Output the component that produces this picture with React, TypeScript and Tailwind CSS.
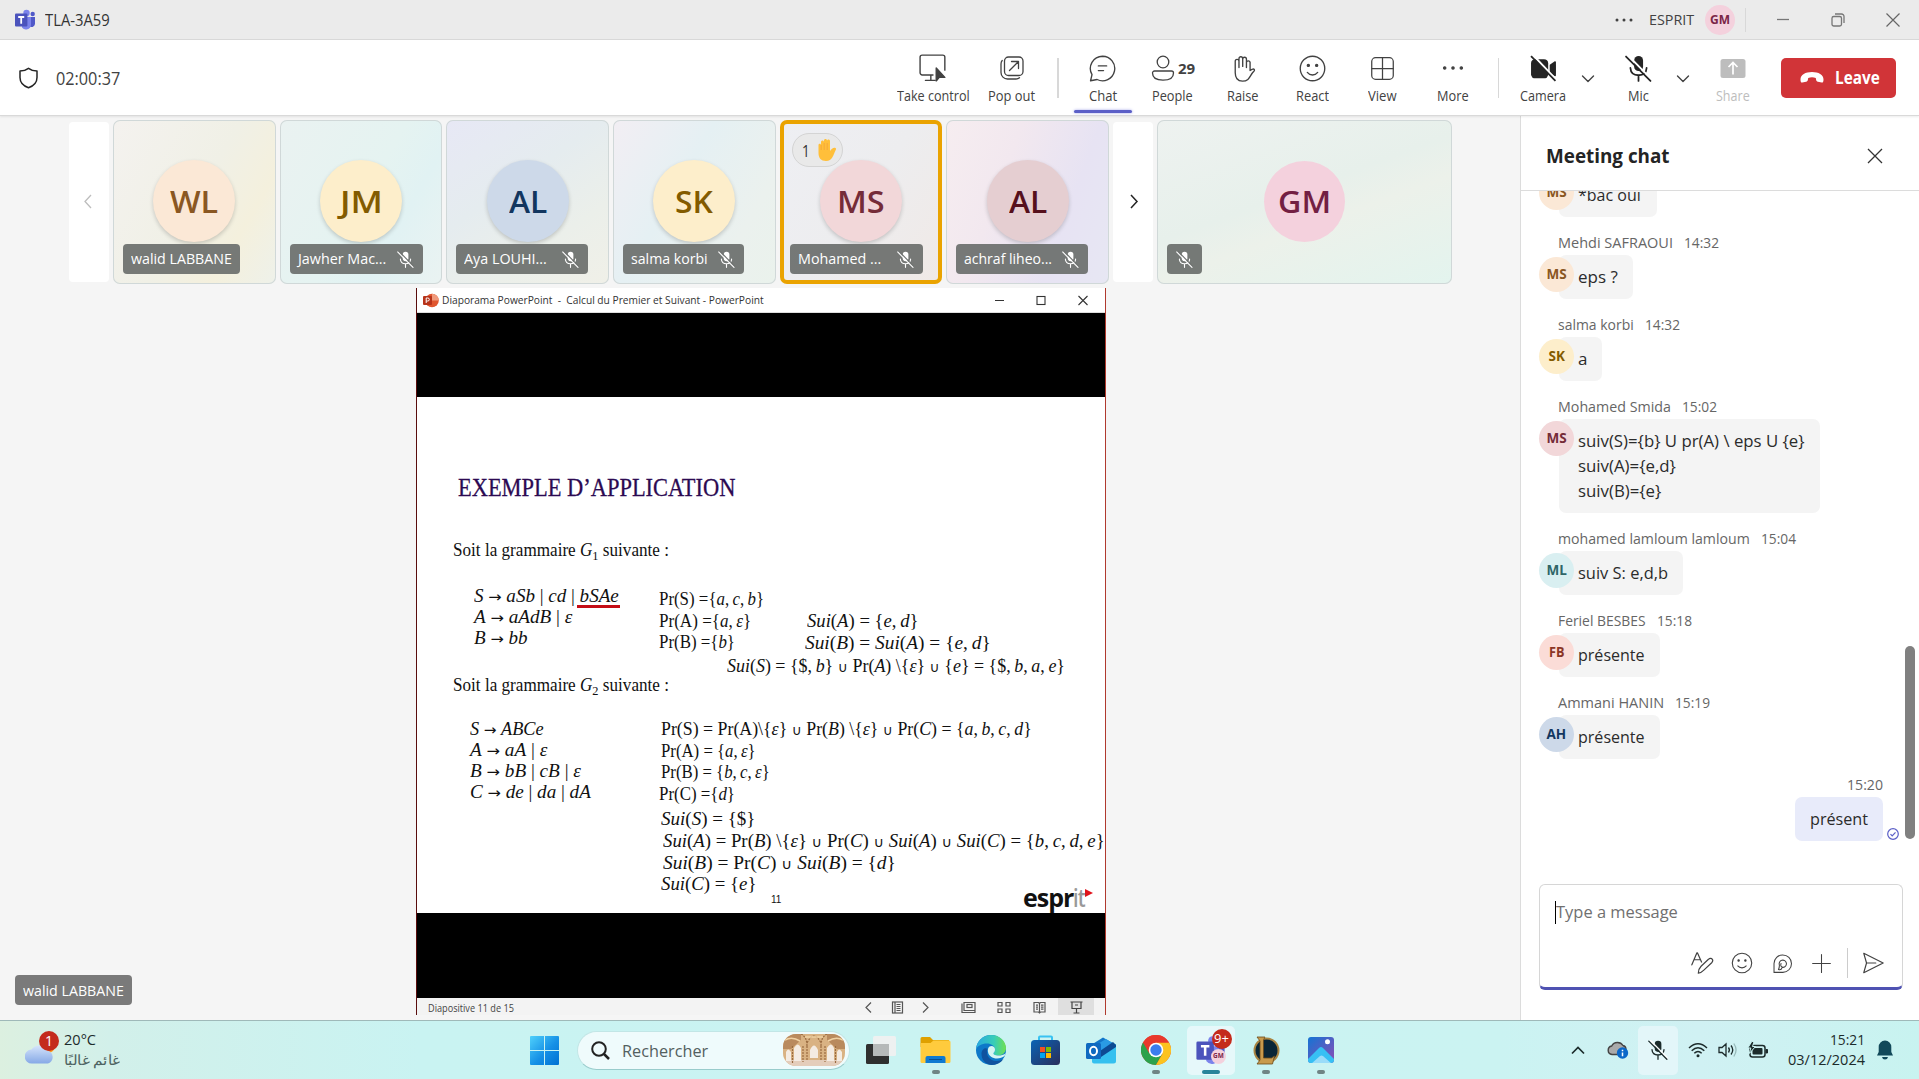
import React, { useLayoutEffect, useRef, useState } from "react";

/* Text squeezed or stretched horizontally so that it fills a fixed width. */
function Fit({ w, className = "", children }: { w: number; className?: string; children: React.ReactNode }) {
  const ref = useRef<HTMLSpanElement>(null);
  const [scale, setScale] = useState(1);
  useLayoutEffect(() => {
    const width = ref.current?.offsetWidth ?? 0;
    if (width > 0) setScale(w / width);
  }, [w]);
  return (
    <span className={`inline-block shrink-0 text-left ${className}`} style={{ width: w }}>
      <span ref={ref} className="inline-block origin-left whitespace-pre" style={{ transform: `scaleX(${scale})` }}>
        {children}
      </span>
    </span>
  );
}

type IconProps = { size?: number; className?: string; sw?: number; children: React.ReactNode };
function Icon({ size = 26, className = "", sw = 1.3, children }: IconProps) {
  return (
    <svg width={size} height={size} viewBox="0 0 26 26" fill="none" stroke="currentColor" strokeWidth={sw} strokeLinecap="round" strokeLinejoin="round" className={`shrink-0 ${className}`}>
      {children}
    </svg>
  );
}

const TeamsLogo = ({ size = 22 }: { size?: number }) => (
  <svg width={size} height={size} viewBox="0 0 22 22" className="shrink-0">
    <circle cx="12.5" cy="4" r="3.2" fill="#7b83eb" />
    <circle cx="18.7" cy="5" r="2.2" fill="#5059c9" />
    <path d="M15 8h6v7a3.5 3.5 0 0 1-6 2z" fill="#5059c9" />
    <path d="M8 8h9v8a5 5 0 0 1-9 2.5z" fill="#7b83eb" />
    <rect x="1" y="4.6" width="12.4" height="13" rx="1" fill="#4b53bc" />
    <path d="M4.2 8h6M7.2 8v6.8" stroke="#fff" strokeWidth="1.8" />
  </svg>
);

const MicOff = ({ size = 20, className = "" }: { size?: number; className?: string }) => (
  <svg width={size} height={size} viewBox="0 0 26 26" className={`shrink-0 ${className}`} fill="none">
    <rect x="8.8" y="1" width="8.6" height="14.5" rx="4.3" fill="currentColor" />
    <path d="M5.2 12.5c.3 4.600 3.500 7 7.800 7s7.500-2.400 7.800-7M13 19.500V25" stroke="currentColor" strokeWidth="1.7" strokeLinecap="round" />
    <path d="M2.600 0L26 24" stroke={className.includes("text-white") ? "#6f7270" : "#fff"} strokeWidth="1.800" />
    <path d="M1 1.500L24.500 25" stroke="currentColor" strokeWidth="1.700" strokeLinecap="round" />
  </svg>
);

const Chevron = () => (
  <svg width="16" height="10" viewBox="0 0 16 10" fill="none" stroke="#424242" strokeWidth="1.4" strokeLinecap="round" strokeLinejoin="round">
    <path d="M2.500 2L8 7.500L13.500 2" />
  </svg>
);

function Tool({ label, w, lw, active, muted, children }: { label: string; w: string; lw: number; active?: boolean; muted?: boolean; children: React.ReactNode }) {
  return (
    <div className={`relative flex h-full shrink-0 flex-col items-center pt-[14px] ${w} ${muted ? "text-[#bdbdbd]" : "text-[#424242]"}`}>
      <div className="flex h-[28px] items-center justify-center">{children}</div>
      <Fit w={lw} className="mt-[4px] h-5 text-[14px] leading-5">{label}</Fit>
      {active && <div className="absolute bottom-[2px] h-[3px] w-[58px] rounded-full bg-[#5b5fc7] shadow-[0_0_3px_#a5a8e8]" />}
    </div>
  );
}

function TitleBar() {
  return (
    <header className="flex h-10 shrink-0 items-center border-b border-[#d9d9d9] bg-[#ebebeb] pl-[14px] text-[#424242]">
      <TeamsLogo />
      <Fit w={65} className="mt-[2px] ml-[9px] text-[15.5px] text-[#333]">TLA-3A59</Fit>
      <div className="ml-auto flex items-center">
        <svg width="18" height="4" className="mr-[16px] fill-[#424242]"><circle cx="2" cy="2" r="1.500" /><circle cx="9" cy="2" r="1.500" /><circle cx="16" cy="2" r="1.500" /></svg>
        <Fit w={45} className="text-[15px]">ESPRIT</Fit>
        <div className="ml-[11px] flex size-[30px] items-center justify-center rounded-full bg-[#f4d1dd] text-[#7a2547]">
          <Fit w={20} className="text-[12px] font-bold">GM</Fit>
        </div>
        <div className="ml-[10px] h-6 w-px bg-[#d8d8d8]" />
        <svg width="14" height="14" className="ml-[30px]" stroke="#777" strokeWidth="1.300"><path d="M1 6.500h12" /></svg>
        <svg width="14" height="14" className="ml-[41px]" fill="none" stroke="#777" strokeWidth="1.300"><rect x="1" y="3.500" width="9.500" height="9.500" rx="1.800" /><path d="M4 1h6.500a2.500 2.500 0 0 1 2.500 2.500V10" /></svg>
        <svg width="14" height="14" className="mr-[19px] ml-[41px]" stroke="#666" strokeWidth="1.200"><path d="M.5 .5l13 13M13.500 .5l-13 13" /></svg>
      </div>
    </header>
  );
}

function Toolbar() {
  return (
    <div className="z-10 flex h-[76px] shrink-0 items-center border-b border-[#d9d9d9] bg-white pr-[23px] pl-[18px] shadow-[0_1px_2px_rgba(0,0,0,0.08)]">
      <svg width="21" height="22" viewBox="0 0 21 22" fill="none" stroke="#242424" strokeWidth="1.500" strokeLinejoin="round"><path d="M10.500 1.300C8.200 3 5.400 4 2 4v6.500c0 5 3.200 8.400 8.500 10.200C15.800 18.900 19 15.500 19 10.500V4c-3.400 0-6.200-1-8.500-2.700z" /></svg>
      <Fit w={64} className="mt-[2px] ml-[17px] text-[17.500px] text-[#424242]">02:00:37</Fit>
      <div className="ml-auto flex h-full items-center">
        <Tool label="Take control" w="w-[90px]" lw={73}>
          <Icon size={28}><path d="M13 19.500H3a2 2 0 0 1-2-2V3a2 2 0 0 1 2-2h19a2 2 0 0 1 2 2v12M6 24.500h9M11 19.500v5" /><path d="M16 13v12l3-3.500 5 .2z" fill="currentColor" /></Icon>
        </Tool>
        <Tool label="Pop out" w="w-[67px]" lw={47}>
          <Icon><rect x="5.500" y="2" width="18.500" height="18.500" rx="4" /><path d="M3.200 5.500C2.300 6.500 2 7.500 2 9v8.500a6.500 6.500 0 0 0 6.500 6.500H17c1.500 0 2.500-.3 3.500-1.200M10.500 15.500l8.500-8.500M12.500 6.500h7v7" /></Icon>
        </Tool>
        <div className="mr-[9px] ml-[12px] h-10 w-[1.500px] bg-[#d8d8d8]" />
        <Tool label="Chat" w="w-[70px]" lw={28} active>
          <Icon size={27}><path d="M13 1.200a11.800 11.800 0 1 1-5.200 22.400L1.500 24.800l1.400-5.900A11.800 11.800 0 0 1 13 1.200zM9 10.500h8M9 15h5" /></Icon>
        </Tool>
        <Tool label="People" w="w-[70px]" lw={41}>
          <Icon><circle cx="13" cy="7" r="5.800" /><path d="M4.500 16h17a2 2 0 0 1 2 2c0 4.500-4 7.200-10.500 7.200S2.500 22.500 2.500 18a2 2 0 0 1 2-2z" /></Icon>
          <Fit w={17} className="ml-[2px] text-[15px] font-bold">29</Fit>
        </Tool>
        <Tool label="Raise" w="w-[70px]" lw={32}>
          <Icon size={27}><path d="M6 14V6a1.800 1.800 0 0 1 3.600 0v6M9.600 11V3.500a1.800 1.800 0 0 1 3.600 0V11M13.200 11V4a1.800 1.800 0 0 1 3.600 0v8M16.800 12V7a1.800 1.800 0 0 1 3.500 0v8c2-1.600 3.500-2 4.200-.8.500 1-.8 1.600-2.200 3.400-2.300 3-3 7.600-9.300 7.600-5 0-7-3.500-7-8V12" /></Icon>
        </Tool>
        <Tool label="React" w="w-[70px]" lw={33}>
          <Icon size={27}><circle cx="13" cy="13" r="11.800" /><path d="M8 16.800c2.500 3.300 7.500 3.300 10 0" /><circle cx="9" cy="10" r="1" fill="currentColor" /><circle cx="17" cy="10" r="1" fill="currentColor" /></Icon>
        </Tool>
        <Tool label="View" w="w-[70px]" lw={29}>
          <Icon size={25}><rect x="1.800" y="1.800" width="22.400" height="22.400" rx="4" /><path d="M13 2v22M2 13h22" /></Icon>
        </Tool>
        <Tool label="More" w="w-[70px]" lw={32}>
          <Icon size={24}><circle cx="4" cy="13" r="1.300" fill="currentColor" /><circle cx="13" cy="13" r="1.300" fill="currentColor" /><circle cx="22" cy="13" r="1.300" fill="currentColor" /></Icon>
        </Tool>
        <div className="mr-[9px] ml-[10px] h-10 w-[1.500px] bg-[#d8d8d8]" />
        <Tool label="Camera" w="w-[70px]" lw={46}>
          <svg width="27" height="27" viewBox="0 0 26 26" className="text-[#242424]"><rect x="1" y="4" width="16.500" height="18.500" rx="4" fill="currentColor" /><path d="M19 9.500l4.500-3.300c.8-.5 1.500-.2 1.500.8v12.500c0 1-.7 1.300-1.500.8L19 17z" fill="currentColor" /><path d="M2.800 0L26 24.500" stroke="#fff" strokeWidth="2" /><path d="M1 1l23.500 24" stroke="currentColor" strokeWidth="1.700" /></svg>
        </Tool>
        <div className="mt-[3px] mr-[5px] flex w-[20px] justify-center"><Chevron /></div>
        <Tool label="Mic" w="w-[70px]" lw={21}><MicOff size={27} className="text-[#242424]" /></Tool>
        <div className="mt-[3px] flex w-[20px] justify-center"><Chevron /></div>
        <Tool label="Share" w="w-[80px]" lw={34} muted>
          <svg width="26" height="26" viewBox="0 0 26 26"><rect x=".5" y="4" width="25" height="19" rx="2.500" fill="currentColor" /><path d="M13 19.500V8M8.500 12L13 7.500l4.500 4.500" fill="none" stroke="#fff" strokeWidth="1.700" /></svg>
        </Tool>
        <div className="ml-[8px] flex h-10 w-[115px] items-center rounded-[5px] bg-[#d13438] pl-[19px] text-white">
          <svg width="24" height="13" viewBox="0 0 24 13" fill="#fff"><path d="M12 1C5.500 1 .5 3.800.5 8.200c0 2.200.4 3.600 1.800 3.400l3.800-.8c1.100-.3 1.600-1 1.800-2.100l.3-1.800c2.300-.8 5.300-.8 7.600 0l.3 1.800c.2 1.100.7 1.800 1.800 2.100l3.800.8c1.400.2 1.800-1.200 1.800-3.400C23.500 3.800 18.500 1 12 1z" /></svg>
          <Fit w={45} className="mt-[1px] ml-[11px] text-[17px] font-bold">Leave</Fit>
        </div>
      </div>
    </div>
  );
}

type Person = { ini: string; iw: number; name: string; nw: number; lw: string; circle: string; bg: string; muted?: boolean; raised?: boolean };
const people: Person[] = [
  { ini: "WL", iw: 48, name: "walid LABBANE", nw: 101, lw: "w-[117px]", circle: "bg-[#fbe8d6] text-[#8a5722]", bg: "bg-[linear-gradient(120deg,#f4f2ef,#f0f0e6_50%,#f4f0dd_75%,#eef1ea)]" },
  { ini: "JM", iw: 43, name: "Jawher Mac...", nw: 88, lw: "w-[133px]", circle: "bg-[#fdeecb] text-[#835b00]", bg: "bg-[linear-gradient(120deg,#eaf2f1,#e5f3f1_50%,#e1f2f3_70%,#eaf3f2)]", muted: true },
  { ini: "AL", iw: 38, name: "Aya LOUHI...", nw: 83, lw: "w-[132px]", circle: "bg-[#cdd9e9] text-[#12365f]", bg: "bg-[linear-gradient(145deg,#e7e8f5,#e5ecef_40%,#ebefea_70%,#f0f0e8)]", muted: true },
  { ini: "SK", iw: 38, name: "salma korbi", nw: 77, lw: "w-[121px]", circle: "bg-[#fdeecb] text-[#835b00]", bg: "bg-[linear-gradient(120deg,#f2eef3,#e5f0f3_40%,#ebf1ee_75%,#eaf2ec)]", muted: true },
  { ini: "MS", iw: 48, name: "Mohamed ...", nw: 83, lw: "w-[133px]", circle: "bg-[#f2d7d9] text-[#752c38]", bg: "bg-[linear-gradient(125deg,#eeeff3,#ededef_50%,#f0e9e6)]", muted: true, raised: true },
  { ini: "AL", iw: 38, name: "achraf liheo...", nw: 88, lw: "w-[132px]", circle: "bg-[#e5ced1] text-[#56101c]", bg: "bg-[linear-gradient(110deg,#f6edf0,#f2e8ef_35%,#e7e3f3_70%,#e7e7f3)]", muted: true },
];

function Tile({ p }: { p: Person }) {
  return (
    <div className={`relative flex flex-1 flex-col items-center rounded-[7px] pt-[40px] ${p.bg} ${p.raised ? "shadow-[inset_0_0_0_4px_#eaa300]" : "shadow-[inset_0_0_0_1px_#d0d8d8]"}`}>
      <div className={`flex size-[82px] shrink-0 items-center justify-center rounded-full shadow-[0_2px_4px_rgba(0,0,0,0.18)] ${p.circle}`}>
        <Fit w={p.iw} className="text-[31px] leading-none font-semibold">{p.ini}</Fit>
      </div>
      <div className={`absolute bottom-[10px] left-[10px] flex h-[30px] items-center justify-between rounded-[4px] bg-[#6f7270]/95 pr-[9px] pl-[8px] text-white ${p.lw}`}>
        <Fit w={p.nw} className="text-[14.500px]">{p.name}</Fit>
        {p.muted && <MicOff size={17} className="text-white" />}
      </div>
      {p.raised && (
        <div className="absolute top-[13px] left-[12px] flex h-[34px] w-[51px] items-center rounded-full border border-[#d4d4d4] bg-[#e9e9e9] pl-[9px]">
          <Fit w={8} className="text-[17px] leading-none text-[#333]">1</Fit>
          <svg width="20" height="24" viewBox="0 0 20 24" className="ml-[7px]">
            <path d="M1.500 15V7c0-1.800 2.500-1.800 2.500 0V4c0-2 3-2 3 0V2.500c0-2 3-2 3 0V3c0-2 3-2 3 0v10c1.500-2 3.500-4 5.500-3 1 .5.500 1.500 0 2.500-2 4-3 10.500-9.500 10.500-5 0-7.500-3-7.500-8z" fill="#ffbf3a" />
            <path d="M4.200 7v5M7.200 5v7M10.200 5v7" stroke="#f09a3b" strokeWidth=".6" />
          </svg>
        </div>
      )}
    </div>
  );
}

function Filmstrip() {
  return (
    <div className="flex h-[164px] w-[1383px] items-center gap-[4px]">
      <div className="flex h-[160px] w-[40px] items-center justify-center rounded-[4px] bg-white pr-[3px] pb-[2px]">
        <svg width="10" height="17" viewBox="0 0 10 17" fill="none" stroke="#bdbdbd" strokeWidth="1.300"><path d="M8 2L2 8.500L8 15" /></svg>
      </div>
      <div className="flex h-full w-[996px] gap-[4px]">{people.map((p, i) => <Tile key={i} p={p} />)}</div>
      <div className="flex h-[160px] w-[40px] items-center justify-center rounded-[4px] bg-white pb-[2px] pl-[2px]">
        <svg width="10" height="17" viewBox="0 0 10 17" fill="none" stroke="#242424" strokeWidth="1.500"><path d="M2 2L8 8.500L2 15" /></svg>
      </div>
      <div className="relative flex h-full flex-1 items-center justify-center rounded-[7px] bg-[linear-gradient(160deg,#eef2f0,#e7f0eb_45%,#ecf1ea_60%,#e3f4ee)] pb-[1px] shadow-[inset_0_0_0_1px_#d0d8d8]">
        <div className="flex size-[81px] items-center justify-center rounded-full bg-[#f4d1dd] text-[#731f43]">
          <Fit w={53} className="text-[31px] leading-none font-semibold">GM</Fit>
        </div>
        <div className="absolute bottom-[10px] left-[10px] flex h-[30px] w-[35px] items-center justify-center rounded-[4px] bg-[#6f7270]/95 text-white">
          <MicOff size={17} className="text-white" />
        </div>
      </div>
    </div>
  );
}

/* Slide lines: x and y are the left end and the baseline; letters are italic unless quoted with backticks. */
type Line = [x: number, y: number, w: number, text: string];
const lines: Line[] = [
  [57, 205, 145, "S → aSb | cd | bSAe"],
  [57, 226, 98, "A → aAdB | ε"],
  [57, 247, 54, "B → bb"],
  [242, 208, 105, "`Pr(S)` ={a, c, b}"],
  [242, 230, 92, "`Pr(A)` ={a, ε}"],
  [242, 251, 76, "`Pr(B)` ={b}"],
  [390, 230, 112, "Sui(A) = {e, d}"],
  [388, 252, 186, "Sui(B) = Sui(A) = {e, d}"],
  [310, 275, 338, "Sui(S) = {$, b} ∪ `Pr`(A) \\{ε} ∪ {e} = {$, b, a, e}"],
  [53, 338, 74, "S → ABCe"],
  [53, 359, 77, "A → aA | ε"],
  [53, 380, 111, "B → bB | cB | ε"],
  [53, 401, 121, "C → de | da | dA"],
  [244, 338, 371, "`Pr(S)` = `Pr(A)`\\{ε} ∪ `Pr`(B) \\{ε} ∪ `Pr`(C) = {a, b, c, d}"],
  [244, 360, 95, "`Pr(A)` = {a, ε}"],
  [244, 381, 109, "`Pr(B)` = {b, c, ε}"],
  [242, 403, 76, "`Pr(C)` ={d}"],
  [244, 428, 94, "Sui(S) = {$}"],
  [246, 450, 442, "Sui(A) = `Pr`(B) \\{ε} ∪ `Pr`(C) ∪ Sui(A) ∪ Sui(C) = {b, c, d, e}"],
  [246, 472, 233, "Sui(B) = `Pr`(C) ∪ Sui(B) = {d}"],
  [244, 493, 95, "Sui(C) = {e}"],
];

function math(text: string) {
  return text.replaceAll(", ", ",\u2009").split(/(`[^`]*`|[A-Za-zε]+|[→∪])/).map((part, i) => {
    if (part.startsWith("`")) return <span key={i}>{part.slice(1, -1)}</span>;
    if (part === "→") return <span key={i} className="font-['DejaVu_Sans'] text-[15px]">→</span>;
    if (part === "∪") return <span key={i} className="font-['DejaVu_Sans'] text-[14px]">∪</span>;
    if (i % 2) return <i key={i}>{part}</i>;
    return <span key={i}>{part}</span>;
  });
}

function SlideText({ x, y, children }: { x: number; y: number; children: React.ReactNode }) {
  return <div className="absolute h-6 leading-6" style={{ left: x, top: y - 18 }}>{children}</div>;
}

function Slide() {
  return (
    <div className="relative h-[516px] bg-white font-['Liberation_Serif',serif] text-[18px] text-[#111]">
      <SlideText x={41} y={97}>
        <Fit w={277} className="text-[26px] leading-6 text-[#2c0a52] [-webkit-text-stroke:0.3px_#2c0a52]">EXEMPLE D’APPLICATION</Fit>
      </SlideText>
      {[{ y: 159, n: "1" }, { y: 294, n: "2" }].map((g) => (
        <SlideText key={g.n} x={36} y={g.y}>
          <Fit w={216}>Soit la grammaire <i>G</i><span className="relative top-[4px] text-[13px] leading-none">{g.n}</span> suivante :</Fit>
        </SlideText>
      ))}
      {lines.map(([x, y, w, t], i) => (
        <SlideText key={i} x={x} y={y}><Fit w={w}>{math(t)}</Fit></SlideText>
      ))}
      <div className="absolute top-[208px] left-[160px] h-[3px] w-[43px] bg-[#c40d16]" />
      <div className="absolute top-[497px] left-[354px] font-['Liberation_Sans',sans-serif] text-[10px] leading-3"><Fit w={10}>11</Fit></div>
      <div className="absolute top-[485px] left-[606px] flex font-['Open_Sans',sans-serif] text-[25px] leading-[30px] font-bold tracking-[-1px]">
        <Fit w={50}>espr</Fit>
        <Fit w={12} className="font-semibold text-[#999]">it</Fit>
        <svg width="8" height="8" viewBox="0 0 8 8" className="mt-[7px]"><path d="M0 0l8 4l-8 4z" fill="#e1121b" /></svg>
      </div>
    </div>
  );
}

function SharedWindow() {
  return (
    <div className="flex h-[727px] w-[690px] shrink-0 flex-col border-r border-l border-r-[#b03a2e] border-l-[#5a0d0d] bg-white">
      <div className="flex h-[25px] items-center border-b border-[#ddd] pl-[6px] text-[#333]">
        <svg width="16" height="15" viewBox="0 0 16 15"><circle cx="9" cy="7.500" r="6.800" fill="#e0562f" /><path d="M9 .7a6.800 6.800 0 0 1 6.800 6.800H9z" fill="#f09a7c" /><rect y="3" width="9" height="9" rx="1" fill="#b7331a" /><path d="M3.200 10V5h1.600a1.500 1.500 0 0 1 0 3H3.200" fill="none" stroke="#fff" /></svg>
        <Fit w={322} className="ml-[3px] text-[11.500px]">{"Diaporama PowerPoint  -  Calcul du Premier et Suivant - PowerPoint"}</Fit>
        <svg width="94" height="11" viewBox="0 0 94 11" className="mr-[16px] ml-auto" fill="none" stroke="#333" strokeWidth="1.100"><path d="M0 5.500h9M83.500 1l9 9M92.500 1l-9 9" /><rect x="42" y="1.500" width="8" height="8" /></svg>
      </div>
      <div className="h-[84px] bg-black" />
      <Slide />
      <div className="h-[85px] bg-black" />
      <div className="flex h-[17px] items-center bg-[#f3f3f3] pl-[11px] text-[#444]">
        <Fit w={86} className="mt-[3px] text-[10px] leading-[17px]">Diapositive 11 de 15</Fit>
        <div className="mr-[11px] ml-auto flex items-center">
          <svg width="64" height="13" viewBox="0 0 64 13" fill="none" stroke="#555" strokeWidth="1.200" className="mt-[2px] mr-[32px]"><path d="M6 1.500L1 6.500l5 5M58 1.500l5 5l-5 5" /><rect x="27.500" y="1" width="10" height="11" /><path d="M30 1v11M31.500 3.500h4M31.500 5.500h4M31.500 7.500h4M31.500 9.500h4" /></svg>
          <svg width="92" height="13" viewBox="0 0 92 13" fill="none" stroke="#555" strokeWidth="1.200" className="mt-[2px] mr-[5px]"><path d="M3 1.500h11v10H1v-9M3 1v8.500h11" /><rect x="6" y="3.500" width="5" height="3" /><path d="M37 1.500h4v3.500h-4zM45 1.500h4v3.500h-4zM37 8h4v3.500h-4zM45 8h4v3.500h-4zM73 1.500h4.500l1 1 1-1H84v9.500h-4.500l-1 1-1-1H73zM78.500 3v8M75 4.200h2M75 6.200h2M75 8.200h2M80 4.200h2.500M80 6.200h2.500M80 8.200h2.500" /></svg>
          <div className="flex h-[17px] w-[36px] items-center justify-center bg-[#dfdfdf] pt-[1px]">
            <svg width="13" height="13" viewBox="0 0 13 13" fill="none" stroke="#444" strokeWidth="1.200"><path d="M.5 1h12M2 1v6.500h9V1M6.500 7.500V12M3.500 12h6M5 4h3" /></svg>
          </div>
        </div>
      </div>
    </div>
  );
}

type Msg = { who?: string; ww?: number; time?: string; ini: string; iw?: number; circle: string; text: [string, number][]; bw: string };
const msgs: Msg[] = [
  { ini: "MS", circle: "bg-[#fbe8d6] text-[#8a5722]", text: [["*bac oui", 63]], bw: "w-[98px]" },
  { who: "Mehdi SAFRAOUI", ww: 115, time: "14:32", ini: "MS", circle: "bg-[#fbe8d6] text-[#8a5722]", text: [["eps ?", 40]], bw: "w-[74px]" },
  { who: "salma korbi", ww: 76, time: "14:32", ini: "SK", iw: 16, circle: "bg-[#fdeecb] text-[#835b00]", text: [["a", 9]], bw: "w-[43px]" },
  { who: "Mohamed Smida", ww: 113, time: "15:02", ini: "MS", circle: "bg-[#f2d7d9] text-[#752c38]", text: [["suiv(S)={b} U pr(A) \\ eps U {e}", 227], ["suiv(A)={e,d}", 98], ["suiv(B)={e}", 83]], bw: "w-[261px]" },
  { who: "mohamed lamloum lamloum", ww: 192, time: "15:04", ini: "ML", circle: "bg-[#d9eff1] text-[#2f6668]", text: [["suiv S: e,d,b", 90]], bw: "w-[124px]" },
  { who: "Feriel BESBES", ww: 88, time: "15:18", ini: "FB", iw: 15, circle: "bg-[#fbdcd7] text-[#8b3526]", text: [["présente", 67]], bw: "w-[101px]" },
  { who: "Ammani HANIN", ww: 106, time: "15:19", ini: "AH", circle: "bg-[#cdd9e9] text-[#12365f]", text: [["présente", 67]], bw: "w-[101px]" },
];

function ChatPanel() {
  return (
    <aside className="flex w-[399px] shrink-0 flex-col border-l border-[#dcdcdc] bg-white">
      <div className="flex h-[75px] shrink-0 items-center border-b border-[#dcdcdc] pt-[5px] pr-[36px] pl-[25px]">
        <Fit w={124} className="mt-[1px] text-[19px] font-bold text-[#242424]">Meeting chat</Fit>
        <svg width="16" height="16" className="ml-auto" stroke="#333" strokeWidth="1.300"><path d="M1 1l14 14M15 1L1 15" /></svg>
      </div>
      <div className="flex min-h-0 flex-1 overflow-hidden">
        <div className="-mt-[18px] flex-1 pl-[18px]">
          {msgs.map((m, i) => (
            <div key={i} className="mb-[15px]">
              {m.who && (
                <div className="mb-[2px] flex h-[21px] items-center gap-[11px] pt-[1px] pl-[19px] text-[14.500px] text-[#666]">
                  <Fit w={m.ww ?? 0}>{m.who}</Fit>
                  <Fit w={35}>{m.time}</Fit>
                </div>
              )}
              <div className="flex">
                <div className={`z-10 mt-[2px] flex size-[35px] shrink-0 items-center justify-center rounded-full ${m.circle}`}>
                  <Fit w={m.iw ?? 20} className="text-[13.500px] font-bold">{m.ini}</Fit>
                </div>
                <div className={`-ml-[15px] flex flex-col rounded-[7px] bg-[#f4f4f4] pt-[8.500px] pb-[10.500px] pl-[19px] text-[#2b2b2b] ${m.bw}`}>
                  {m.text.map(([t, w]) => <Fit key={t} w={w} className="h-[25px] text-[17px] leading-[25px]">{t}</Fit>)}
                </div>
              </div>
            </div>
          ))}
          <div className="flex justify-end gap-[4px] pr-[1px]">
            <div className="flex flex-col items-end">
              <Fit w={36} className="mt-[1px] mb-[2px] h-5 text-[14.500px] leading-5 text-[#666]">15:20</Fit>
              <div className="flex h-[44px] w-[88px] items-center rounded-[7px] bg-[#e8ebfa] pl-[15px] text-[#2b2b2b]">
                <Fit w={58} className="text-[17px]">présent</Fit>
              </div>
            </div>
            <svg width="12" height="12" viewBox="0 0 12 12" fill="none" stroke="#5b5fc7" strokeWidth="1.200" className="mt-auto mb-[1px]"><circle cx="6" cy="6" r="5.300" /><path d="M3.500 6.200l1.700 1.700 3.300-3.500" /></svg>
          </div>
        </div>
        <div className="mt-[455px] mr-[4px] ml-[5px] h-[193px] w-[10px] rounded-full bg-[#808080]" />
      </div>
      <div className="mr-[16px] mb-[30px] ml-[18px] flex h-[106px] shrink-0 flex-col rounded-[6px] border border-b-[3px] border-[#d6d6d6] border-b-[#4f52b2] bg-white">
        <div className="flex h-[54px] items-center pl-[15px]">
          <div className="h-[23px] w-px bg-black" />
          <Fit w={122} className="text-[17px] text-[#707070]">Type a message</Fit>
        </div>
        <div className="flex h-[48px] items-center pl-[150px] text-[#424242]">
          <Icon size={24}><path d="M2 15L7.500 2h.5l4.500 10M4.500 9.500H11M9 24c0-4 1-5.500 3-7.500l8-7.500c1.500-1.500 3.500-1 4.200 0 .8 1.200.5 2.500-.7 3.700l-8.500 8c-2 2-3.500 3.300-6 3.300z" /></Icon>
          <Icon size={22} className="ml-[17px]"><circle cx="13" cy="13" r="11.500" /><path d="M8 16.500c2.500 3 7.500 3 10 0" /><circle cx="9" cy="10" r=".8" fill="currentColor" /><circle cx="17" cy="10" r=".8" fill="currentColor" /></Icon>
          <Icon size={21} className="ml-[19px]"><path d="M2.500 24V13A10.800 10.800 0 1 1 13.500 24zM8 20.500c1-1.500 1.200-3 1.200-5.500a4.500 4.500 0 1 1 4.500 2.800c-2.200-.2-3.500-1.800-2.500-4.800M8 20.500c2 .5 4-.5 4.500-2.500" /></Icon>
          <Icon size={21} className="ml-[18px]"><path d="M13 2v22M2 13h22" /></Icon>
          <div className="ml-[15px] h-[30px] w-px bg-[#ccc]" />
          <Icon size={24} className="ml-[13px]"><path d="M3 2.500l21 10.500L3 23.500l3-10.500zM6 13h10" /></Icon>
        </div>
      </div>
    </aside>
  );
}

function TaskItem({ dot, children }: { dot?: boolean; children: React.ReactNode }) {
  return (
    <div className="relative flex h-[58px] w-[55px] items-center justify-center">
      {children}
      {dot && <div className="absolute bottom-[5px] h-[4px] w-[8px] rounded-full bg-[#6f8484]" />}
    </div>
  );
}

function Taskbar() {
  return (
    <footer className="flex h-[59px] shrink-0 items-center border-t border-[#9fb9b9] bg-[linear-gradient(90deg,#dcf0e0,#d2f0ea_110px,#c9f3f2_420px,#cbf3f2_1500px,#d0f1f3_1700px,#c8f3f0)] text-[#1c2b2b]">
      <div className="flex w-[530px] items-center pl-[25px]">
        <svg width="36" height="38" viewBox="0 0 36 38">
          <defs><linearGradient id="cl" x1="0" y1="0" x2="0" y2="1"><stop offset="0" stopColor="#d5e4fb" /><stop offset="1" stopColor="#86a9e6" /></linearGradient></defs>
          <circle cx="23" cy="15" r="7" fill="#ff9a1f" />
          <path d="M7 32.500a7 7 0 0 1-.5-14A9 9 0 0 1 22 19.500a6.700 6.700 0 0 1 1 13z" fill="url(#cl)" />
          <circle cx="24" cy="10" r="10" fill="#c42b1c" />
          <text x="24" y="15" textAnchor="middle" fontSize="14" fill="#fff" fontFamily="Open Sans">1</text>
        </svg>
        <div className="-mt-[2px] ml-[3px] flex flex-col">
          <Fit w={32} className="h-[22px] text-[15px] leading-[22px]">20°C</Fit>
          <Fit w={56} className="h-[20px] text-[14px] leading-[20px] text-[#4e6361]">غائم غالبًا</Fit>
        </div>
      </div>
      <svg width="29" height="29" viewBox="0 0 29 29">
        <defs><linearGradient id="wn" x1="0" y1="0" x2="1" y2="1"><stop offset="0" stopColor="#4fd0fb" /><stop offset=".55" stopColor="#1590e6" /><stop offset="1" stopColor="#0070d2" /></linearGradient></defs>
        <path d="M0 1q0-1 1-1h13v14H0zM15 0h13q1 0 1 1v13H15zM0 15h14v14H1q-1 0-1-1zM15 15h14v13q0 1-1 1H15z" fill="url(#wn)" />
      </svg>
      <div className="ml-[18px] flex h-[39px] w-[273px] items-center rounded-full border border-b-[#9cc] border-[#c2e6e6] bg-[#effbfc] pl-[13px]">
        <svg width="19" height="19" viewBox="0 0 19 19" fill="none" stroke="#222" strokeWidth="2"><circle cx="8" cy="8" r="6.800" /><path d="M13 13l5 5" strokeWidth="2.500" /></svg>
        <Fit w={86} className="mt-[1px] ml-[12px] text-[17px] text-[#53605f]">Rechercher</Fit>
        <svg width="62" height="32" viewBox="0 0 62 32" className="mr-[4px] ml-auto">
          <defs><clipPath id="pill"><rect width="62" height="32" rx="13" /></clipPath></defs>
          <g clipPath="url(#pill)">
            <rect width="62" height="32" fill="#d9b283" />
            <path d="M0 26h62v6H0z" fill="#e4cdbb" />
            <path d="M0 0h18v6L8 15H0zM62 0H44v6l10 9h8z" fill="#b98a5e" />
            <path d="M3 27V18q2-5 5 0v9zM11 27V14q4-7 7 0v13zM27 24V16q4-9 8 0v8zM44 27V14q4-7 7 0v13zM54 27V18q2-5 5 0v9z" fill="#f4ebe2" />
            <path d="M18 0q6 3 6 12M44 0q-6 3-6 12M24 9q7-14 14 0M20 12v16M24 12v14M38 12v14M42 12v16M9.500 12v17M52.500 12v17" stroke="#9a6b40" strokeWidth="1.200" fill="none" strokeDasharray="2 1" />
            <path d="M2 6q7-4 15 1M60 6q-7-4-15 1M22 3h18" stroke="#f0d2a4" strokeWidth="1.500" fill="none" />
          </g>
        </svg>
      </div>
      <div className="ml-[3px] flex">
        <TaskItem>
          <svg width="30" height="30" viewBox="0 0 30 30"><rect y="9" width="23" height="20" rx="1.500" fill="#2f2f2f" /><rect x="7" y="1" width="23" height="20" rx="1.500" fill="#eef1f1" /><path d="M7 9h16v12H8.500Q7 21 7 19.500z" fill="#b6b9b9" /></svg>
        </TaskItem>
        <TaskItem dot>
          <svg width="31" height="28" viewBox="0 0 31 28"><path d="M.5 2.500Q.5 1 2 1h8l3 3h16v7H.5z" fill="#dfa000" /><path d="M.5 7h10l3-2.500h15.500Q30.500 4.500 30.500 6v19.500Q30.500 27 29 27H2Q.5 27 .5 25.500z" fill="#ffcb3d" /><path d="M5.500 27v-5q0-2 2-2h16q2 0 2 2v5z" fill="#0f7ad1" /><path d="M9 23.500h13" stroke="#0a4f91" /></svg>
        </TaskItem>
        <TaskItem>
          <svg width="30" height="30" viewBox="0 0 30 30">
            <defs><linearGradient id="ed" x1="0" y1="0" x2="1" y2="0"><stop offset="0" stopColor="#29a8e0" /><stop offset=".6" stopColor="#37cdb8" /><stop offset="1" stopColor="#70e050" /></linearGradient></defs>
            <circle cx="15" cy="15" r="15" fill="#0d78c9" />
            <path d="M0 14C1 5 8 0 15 0c9 0 15 6.500 15 13 0 5-4 7.500-8 7.500-3 0-5-1-4.500-2.500 1-1 1.500-2 1.500-3.500C19 11 15 8.500 11 8.500 5.500 8.500 1.500 11 0 14z" fill="url(#ed)" />
            <path d="M11.500 14c-2 6 2 12 9 12 3 0 5-.8 7-2-3 4-7 6-12 6-7-1-10-6-10-11 0-4 3-7 6-5z" fill="#10539f" />
            <path d="M17.500 18c1-1 1.500-2 1.500-3.500 0-2-1.500-3.500-3.500-3.500-3 0-4 3-3.500 6 .7 4 4.500 6.500 9 6.500 3 0 5.500-1 7.500-2.500l1.500-3c-2 2-5 2.500-8 2.500-3 0-5-1-4.500-2.500z" fill="#d6f5f3" />
          </svg>
        </TaskItem>
        <TaskItem>
          <svg width="29" height="30" viewBox="0 0 29 30">
            <defs><linearGradient id="st" x1="0" y1="0" x2="1" y2="1"><stop offset="0" stopColor="#0a63b5" /><stop offset="1" stopColor="#2a2e5b" /></linearGradient></defs>
            <path d="M8 6V2.500Q8 1.500 9 1.500h11q1 0 1 1V6" fill="none" stroke="#38c2f2" strokeWidth="2" /><rect y="5" width="29" height="25" rx="3.500" fill="url(#st)" />
            <path fill="#f25022" d="M9 12h5v5H9z" /><path fill="#7fba00" d="M15 12h5v5h-5z" /><path fill="#00a4ef" d="M9 18h5v5H9z" /><path fill="#ffb900" d="M15 18h5v5h-5z" />
          </svg>
        </TaskItem>
        <TaskItem>
          <svg width="30" height="27" viewBox="0 0 30 27"><path d="M5 8L17 .5 30 8v8L17 20z" fill="#1376c9" /><path d="M10 8l10-6 10 6v6l-12 5z" fill="#2a9be4" /><path d="M6 18l24-11v17q0 2.500-2.500 2.500H8q-2 0-2-2z" fill="#35c0ef" /><path d="M14 14L27 5l3 3v2L15 20z" fill="#0d4a93" /><rect y="6" width="15" height="16" rx="1.500" fill="#0f69c0" /><ellipse cx="7.500" cy="14" rx="3.500" ry="4.200" fill="none" stroke="#fff" strokeWidth="2" /></svg>
        </TaskItem>
        <TaskItem dot>
          <svg width="30" height="30" viewBox="0 0 30 30"><circle cx="15" cy="15" r="15" fill="#e8392c" /><path d="M2 7.500A15 15 0 0 0 15 30l6.500-11.300L15 15z" fill="#2ba24c" /><path d="M15 30A15 15 0 0 0 28 7.500H15L21.500 18.700z" fill="#fcc31e" /><path d="M2 7.500L8.500 18.700 15 7.500h13A15 15 0 0 0 2 7.500z" fill="#e8392c" /><circle cx="15" cy="15" r="7.300" fill="#fff" /><circle cx="15" cy="15" r="5.700" fill="#3b7ded" /></svg>
        </TaskItem>
        <div className="relative flex h-[58px] w-[55px] items-center justify-center">
          <div className="relative flex h-[49px] w-[48px] items-center justify-center rounded-[5px] bg-[#e6f8fa]">
            <TeamsLogo size={31} />
            <div className="absolute top-[3px] right-[3px] flex size-[20px] items-center justify-center rounded-full bg-[#c42b1c] text-white"><Fit w={15} className="text-[13px]">9+</Fit></div>
            <div className="absolute right-[9px] bottom-[11px] flex size-[15px] items-center justify-center rounded-full bg-[#f4d1dd] text-[#7a2547]"><Fit w={11} className="text-[7px] font-bold">GM</Fit></div>
          </div>
          <div className="absolute bottom-[5px] h-[4px] w-[18px] rounded-full bg-[#27849a]" />
        </div>
        <TaskItem dot>
          <svg width="28" height="29" viewBox="0 0 28 29"><circle cx="14.500" cy="14.500" r="12" fill="#0b2636" stroke="#a98442" strokeWidth="2" /><path d="M5 1h8l-1.500 3v18h8l3-2-2 8H5l3-4V5z" fill="#c89a4d" stroke="#6b4a1b" strokeWidth=".8" /></svg>
        </TaskItem>
        <TaskItem dot>
          <svg width="26" height="26" viewBox="0 0 26 26">
            <defs><linearGradient id="ph" x1="0" y1="0" x2="1" y2="1"><stop offset="0" stopColor="#1474d4" /><stop offset="1" stopColor="#8d4cb4" /></linearGradient><clipPath id="pc"><rect width="26" height="26" rx="3" /></clipPath></defs>
            <g clipPath="url(#pc)"><rect width="26" height="26" fill="url(#ph)" /><path d="M-1 23L11 11q2-2 4 0l12 12v4H-1z" fill="#37c0f4" /><path d="M3 27l9-8q1.500-1.200 3 0l9 8z" fill="#9adcf9" /><circle cx="19.500" cy="4.800" r="2.500" fill="#fff" /></g>
          </svg>
        </TaskItem>
      </div>
      <div className="ml-auto flex h-full items-center">
        <svg width="14" height="9" viewBox="0 0 14 9" fill="none" stroke="#1c2b2b" strokeWidth="1.700" className="mr-[22px]"><path d="M1 7.500L7 1.500l6 6" /></svg>
        <svg width="22" height="18" viewBox="0 0 22 18" className="mr-[9px]"><path d="M5 13.500a4.300 4.300 0 0 1-.3-8.500A6.500 6.500 0 0 1 16 4.500c2 .5 3 2 3 4v5z" fill="#aaa" stroke="#444" strokeWidth="1.400" /><circle cx="15.500" cy="12" r="5.700" fill="#0b68c9" /><path d="M15.500 11.500v3.700M15.500 8.800v1.500" stroke="#fff" strokeWidth="1.500" /></svg>
        <div className="mr-[10px] flex h-[49px] w-[40px] items-center justify-center rounded-[5px] bg-[#e3f6f9]"><MicOff size={20} className="text-[#1c2b2b]" /></div>
        <svg width="20" height="16" viewBox="0 0 20 16" fill="none" stroke="#1c2b2b" strokeWidth="1.500" className="mr-[10px]"><path d="M1 6q9-8.500 18 0M3.700 8.700q6.300-6 12.600 0M6.300 11.300q3.700-3.500 7.400 0" /><circle cx="10" cy="13.700" r="1.500" fill="#1c2b2b" stroke="none" /></svg>
        <svg width="20" height="16" viewBox="0 0 20 16" fill="none" stroke="#1c2b2b" strokeWidth="1.300" className="mr-[9px]"><path d="M1 5.500h3L8 2v12l-4-3.500H1zM10.500 5.500q1.800 2.500 0 5M13 3.500q3.500 4.500 0 9" /><path d="M15.800 1.500q4.500 6.500 0 13" stroke="#9bb" /></svg>
        <svg width="22" height="18" viewBox="0 0 22 18" className="mr-[19px] mb-[1px]"><rect x="3" y="4.500" width="15" height="11.500" rx="2.500" fill="none" stroke="#1c2b2b" strokeWidth="1.500" /><rect x="5.500" y="7" width="10" height="6.500" rx="1" fill="#1c2b2b" /><path d="M19 8.500h1.500v3.500H19z" fill="#1c2b2b" stroke="#1c2b2b" /><path d="M4.800 .5L.8 7h3L2.300 12.500 8.500 5.500H5.500L7 .5z" fill="#1c2b2b" stroke="#cbf3f2" strokeWidth="1" /></svg>
        <div className="flex flex-col items-end text-[14.500px]">
          <Fit w={35} className="h-5 leading-5">15:21</Fit>
          <Fit w={77} className="h-5 leading-5">03/12/2024</Fit>
        </div>
        <svg width="16" height="20" viewBox="0 0 16 20" className="mr-[26px] ml-[12px]" fill="#12495a"><path d="M8 .5A6.300 6.300 0 0 0 1.700 7v5L0 15.500h16L14.300 12V7A6.300 6.300 0 0 0 8 .5zM5 17h6q-.5 2.500-3 2.500T5 17z" /></svg>
      </div>
    </footer>
  );
}

export default function App() {
  return (
    <div className="flex h-[1079px] w-[1919px] flex-col overflow-hidden bg-white font-['Open_Sans','Noto_Sans',sans-serif]">
      <TitleBar />
      <Toolbar />
      <div className="flex min-h-0 flex-1">
        <main className="relative flex flex-1 flex-col bg-[#f5f5f5] pt-[4px]">
          <div className="pl-[69px]"><Filmstrip /></div>
          <div className="mt-[4px] flex pl-[416px]"><SharedWindow /></div>
          <div className="absolute bottom-[15px] left-[15px] flex h-[30px] w-[117px] items-center rounded-[4px] bg-[#7a7a7a] pl-[8px] text-white">
            <Fit w={101} className="mt-[1px] text-[14.500px]">walid LABBANE</Fit>
          </div>
        </main>
        <ChatPanel />
      </div>
      <Taskbar />
    </div>
  );
}
